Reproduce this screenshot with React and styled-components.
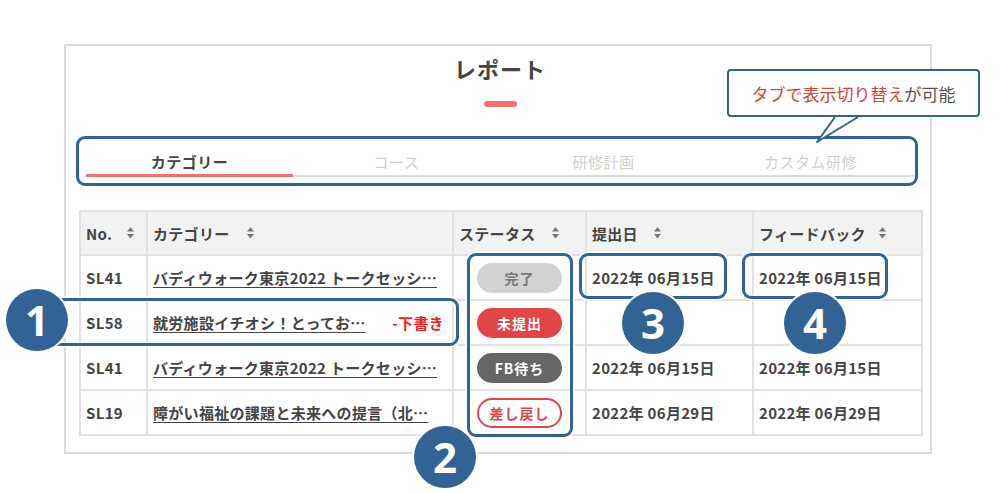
import React from "react";
import styled, { createGlobalStyle, css } from "styled-components";

const GlobalStyle = createGlobalStyle`
  html, body {
    margin: 0;
    padding: 0;
    background: #fff;
  }
  body {
    font-family: "Noto Sans CJK JP", "Noto Sans", sans-serif;
    color: #444;
  }
  * { box-sizing: border-box; }
`;

const NAVY = "#336394";

const Page = styled.div`
  position: relative;
  width: 1000px;
  height: 493px;
  padding: 44px 0 0 64px;
  overflow: hidden;
`;

const Card = styled.section`
  width: 868px;
  height: 410px;
  border: 2px solid #dcdcdc;
  padding: 7px 9px 0 13px;
  display: flex;
  flex-direction: column;
  align-items: stretch;
`;

const Title = styled.h2`
  margin: 0;
  font-size: 22px;
  line-height: 30px;
  font-weight: 700;
  letter-spacing: 1px;
  text-align: center;
  color: #444;
`;

const TitleMark = styled.span`
  display: block;
  width: 33px;
  height: 6px;
  margin: 18px auto 0;
  border-radius: 3px;
  background: #f47272;
`;

const Tabs = styled.nav`
  display: grid;
  grid-template-columns: repeat(4, 1fr);
  margin: 44px 7px 0;
  border-bottom: 2px solid #dcdcdc;
`;

const Tab = styled.div`
  font-size: 15px;
  line-height: 22px;
  letter-spacing: 0.5px;
  text-align: center;
  padding-bottom: 1px;
  margin-bottom: -2px;
  border-bottom: 3px solid transparent;
  color: #cfcfcf;
  font-weight: 400;
  ${(p) =>
    p.$active &&
    css`
      color: #444;
      font-weight: 700;
      border-bottom-color: #f47272;
    `}
`;

const Table = styled.table`
  margin-top: 33px;
  width: 842px;
  border-collapse: collapse;
  table-layout: fixed;
  font-size: 15px;
  font-weight: 700;
  letter-spacing: 0.3px;
  color: #444;

  th, td {
    border: 2px solid #e2e2e2;
    padding: 0 5px;
    text-align: left;
    white-space: nowrap;
    overflow: hidden;
  }
  th {
    height: 44px;
    background: #f2f2f2;
  }
  td {
    height: 45px;
  }
`;

const HeadCell = styled.span`
  display: inline-flex;
  align-items: center;
  gap: ${(p) => p.$gap || 14}px;
`;

const SortIcon = () => (
  <svg width="7" height="12" viewBox="0 0 7 12" style={{ display: "block" }}>
    <polygon points="3.5,0 7,4.5 0,4.5" fill="#777" />
    <polygon points="0,7 7,7 3.5,11.5" fill="#777" />
  </svg>
);

const CategoryCell = styled.div`
  display: flex;
  justify-content: space-between;
  align-items: center;
`;

const TitleLink = styled.a`
  color: #444;
  text-decoration: underline;
  text-underline-offset: 3px;
  text-decoration-thickness: 1px;
`;

const Draft = styled.span`
  color: #f02020;
  font-weight: 700;
  margin-right: 3px;
`;

const StatusCell = styled.td`
  text-align: center !important;
`;

const pillVariants = {
  done: css`
    background: #d2d2d2;
    color: #777;
    border-color: #d2d2d2;
  `,
  unsubmitted: css`
    background: #e04646;
    color: #fff;
    border-color: #e04646;
  `,
  waiting: css`
    background: #666;
    color: #fff;
    border-color: #666;
  `,
  returned: css`
    background: #fff;
    color: #e04646;
    border-color: #e04646;
  `,
};

const Pill = styled.span`
  display: inline-flex;
  align-items: center;
  justify-content: center;
  width: 85px;
  height: 30px;
  border-radius: 15px;
  border: 2px solid;
  font-size: 14px;
  font-weight: 700;
  letter-spacing: 1px;
  ${(p) => pillVariants[p.$variant]}
`;

/* ---- annotations laid over the screenshot ---- */

const Frame = styled.div`
  position: absolute;
  left: ${(p) => p.$x}px;
  top: ${(p) => p.$y}px;
  width: ${(p) => p.$w}px;
  height: ${(p) => p.$h}px;
  border: 3px solid ${NAVY};
  border-radius: 9px;
  box-shadow: 0 0 0 1.5px #fff, inset 0 0 0 1px rgba(255, 255, 255, 0.6);
  pointer-events: none;
`;

const Badge = styled.div`
  position: absolute;
  left: ${(p) => p.$cx - 31}px;
  top: ${(p) => p.$cy - 31}px;
  width: 62px;
  height: 62px;
  border-radius: 50%;
  background: ${NAVY};
  box-shadow: 0 0 0 2px #fff;
  color: #fff;
  font-family: "Noto Sans", sans-serif;
  font-weight: 700;
  font-size: 42px;
  line-height: 62px;
  text-align: center;
`;

const Callout = styled.div`
  position: absolute;
  left: 727px;
  top: 69px;
  width: 253px;
  height: 48px;
  border: 2px solid ${NAVY};
  border-radius: 4px;
  background: #fff;
  display: flex;
  align-items: center;
  justify-content: center;
  font-size: 17px;
  font-weight: 400;
  color: #555;
`;

const CalloutAccent = styled.span`
  color: #d3452f;
`;

const CalloutTail = styled.svg`
  position: absolute;
  left: 813px;
  top: 114px;
  overflow: visible;
`;

const rows = [
  {
    no: "SL41",
    title: "バディウォーク東京2022 トークセッシ…",
    status: ["done", "完了"],
    submitted: "2022年 06月15日",
    feedback: "2022年 06月15日",
  },
  {
    no: "SL58",
    title: "就労施設イチオシ！とってお…",
    draft: true,
    status: ["unsubmitted", "未提出"],
    submitted: "",
    feedback: "",
  },
  {
    no: "SL41",
    title: "バディウォーク東京2022 トークセッシ…",
    status: ["waiting", "FB待ち"],
    submitted: "2022年 06月15日",
    feedback: "2022年 06月15日",
  },
  {
    no: "SL19",
    title: "障がい福祉の課題と未来への提言（北…",
    status: ["returned", "差し戻し"],
    submitted: "2022年 06月29日",
    feedback: "2022年 06月29日",
  },
];

const tabs = ["カテゴリー", "コース", "研修計画", "カスタム研修"];

export default function App() {
  return (
    <Page>
      <GlobalStyle />
      <Card>
        <Title>レポート</Title>
        <TitleMark />
        <Tabs>
          {tabs.map((t, i) => (
            <Tab key={t} $active={i === 0}>
              {t}
            </Tab>
          ))}
        </Tabs>
        <Table>
          <colgroup>
            <col style={{ width: 67 }} />
            <col style={{ width: 306 }} />
            <col style={{ width: 133 }} />
            <col style={{ width: 167 }} />
            <col style={{ width: 169 }} />
          </colgroup>
          <thead>
            <tr>
              <th>
                <HeadCell $gap={15}>No.<SortIcon /></HeadCell>
              </th>
              <th>
                <HeadCell $gap={17}>カテゴリー<SortIcon /></HeadCell>
              </th>
              <th>
                <HeadCell $gap={16}>ステータス<SortIcon /></HeadCell>
              </th>
              <th>
                <HeadCell $gap={16}>提出日<SortIcon /></HeadCell>
              </th>
              <th>
                <HeadCell $gap={13}>フィードバック<SortIcon /></HeadCell>
              </th>
            </tr>
          </thead>
          <tbody>
            {rows.map((r, i) => (
              <tr key={i}>
                <td>{r.no}</td>
                <td>
                  <CategoryCell>
                    <TitleLink>{r.title}</TitleLink>
                    {r.draft && <Draft>-下書き</Draft>}
                  </CategoryCell>
                </td>
                <StatusCell>
                  <Pill $variant={r.status[0]}>{r.status[1]}</Pill>
                </StatusCell>
                <td>{r.submitted}</td>
                <td>{r.feedback}</td>
              </tr>
            ))}
          </tbody>
        </Table>
      </Card>

      <Frame $x={76} $y={136} $w={842} $h={50} />
      <Frame $x={30} $y={298} $w={429} $h={48} />
      <Frame $x={467} $y={253} $w={106} $h={184} />
      <Frame $x={579} $y={253} $w={148} $h={46} />
      <Frame $x={742} $y={253} $w={146} $h={46} />

      <Callout>
        <CalloutAccent>タブで表示切り替え</CalloutAccent>が可能
      </Callout>
      <CalloutTail width="50" height="30" viewBox="0 0 50 30">
        <polygon points="22,3 45,3 4,28" fill="#fff" />
        <polyline
          points="22,3 4,28 45,3"
          fill="none"
          stroke={NAVY}
          strokeWidth="2"
          strokeLinejoin="round"
        />
      </CalloutTail>

      <Badge $cx={37} $cy={320}>1</Badge>
      <Badge $cx={445} $cy={457}>2</Badge>
      <Badge $cx={653} $cy={323}>3</Badge>
      <Badge $cx={815} $cy={323}>4</Badge>
    </Page>
  );
}
